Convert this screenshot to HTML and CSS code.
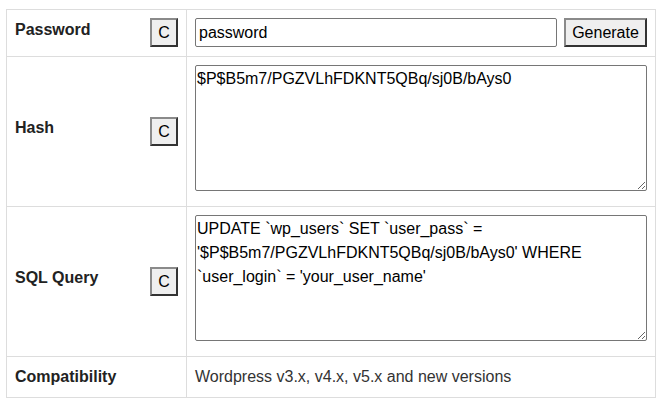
FILE: index.html
```html
<!DOCTYPE html>
<html>
<head>
<meta charset="utf-8">
<link rel="stylesheet" href="styles.css">
</head>
<body>
<div class="grid">
  <div class="cell label-cell">
    <span class="label shifted">Password</span>
    <button class="btn copy">C</button>
  </div>
  <div class="cell value-cell row-input">
    <input class="pw-input" type="text" value="password">
    <button class="btn gen">Generate</button>
  </div>

  <div class="cell label-cell">
    <span class="label shifted">Hash</span>
    <button class="btn copy">C</button>
  </div>
  <div class="cell value-cell">
    <textarea class="area">$P$B5m7/PGZVLhFDKNT5QBq/sj0B/bAys0</textarea>
  </div>

  <div class="cell label-cell">
    <span class="label shifted">SQL Query</span>
    <button class="btn copy">C</button>
  </div>
  <div class="cell value-cell">
    <textarea class="area">UPDATE `wp_users` SET `user_pass` = '$P$B5m7/PGZVLhFDKNT5QBq/sj0B/bAys0' WHERE `user_login` = 'your_user_name'</textarea>
  </div>

  <div class="cell label-cell">
    <span class="label">Compatibility</span>
  </div>
  <div class="cell value-cell compat">Wordpress v3.x, v4.x, v5.x and new versions</div>
</div>
</body>
</html>
```

FILE: styles.css
```css
* { box-sizing: border-box; }

html, body {
  margin: 0;
  padding: 0;
  background: #fff;
}

body {
  font-family: "Liberation Sans", Arial, sans-serif;
  font-size: 16px;
  line-height: 1.5;
  color: #222;
}

.grid {
  margin: 9px 0 0 6px;
  width: 650px;
  display: grid;
  grid-template-columns: 180px 469px;
  grid-template-rows: 47px 150px 150px 41px;
  border-top: 1px solid #dddddd;
  border-left: 1px solid #dddddd;
}

.cell {
  border-right: 1px solid #dddddd;
  border-bottom: 1px solid #dddddd;
  padding: 8px;
}

.label-cell {
  display: flex;
  align-items: center;
  justify-content: space-between;
}

.label {
  font-weight: bold;
  color: #222;
}

.label.shifted {
  margin-top: -7px;
}

.btn {
  font-family: "Liberation Sans", Arial, sans-serif;
  font-size: 16px;
  line-height: 23px;
  color: #000;
  background: #efefef;
  border: 2px solid;
  border-color: #8a8a8a #333333 #333333 #8a8a8a;
  padding: 0 6px;
  margin: 0;
  height: 29px;
  border-radius: 0;
}

.copy {
  width: 28px;
  padding: 0;
  margin-top: -1px;
}

.row-input {
  display: flex;
  align-items: flex-start;
  gap: 7px;
}

.pw-input {
  flex: 1;
  min-width: 0;
  height: 29px;
  margin: 0;
  padding: 1px 3px;
  border: 1px solid #767676;
  border-radius: 2px;
  font-family: "Liberation Sans", Arial, sans-serif;
  font-size: 16px;
  color: #000;
  background: #fff;
}

.gen {
  width: 83px;
  padding: 0;
}

.area {
  display: block;
  width: 452px;
  height: 126px;
  margin: 0;
  padding: 1px 1px;
  border: 1px solid #767676;
  border-radius: 2px;
  font-family: "Liberation Sans", Arial, sans-serif;
  font-size: 16px;
  line-height: 24px;
  color: #000;
  background: #fff;
  resize: both;
}

.compat {
  color: #333;
}
```
